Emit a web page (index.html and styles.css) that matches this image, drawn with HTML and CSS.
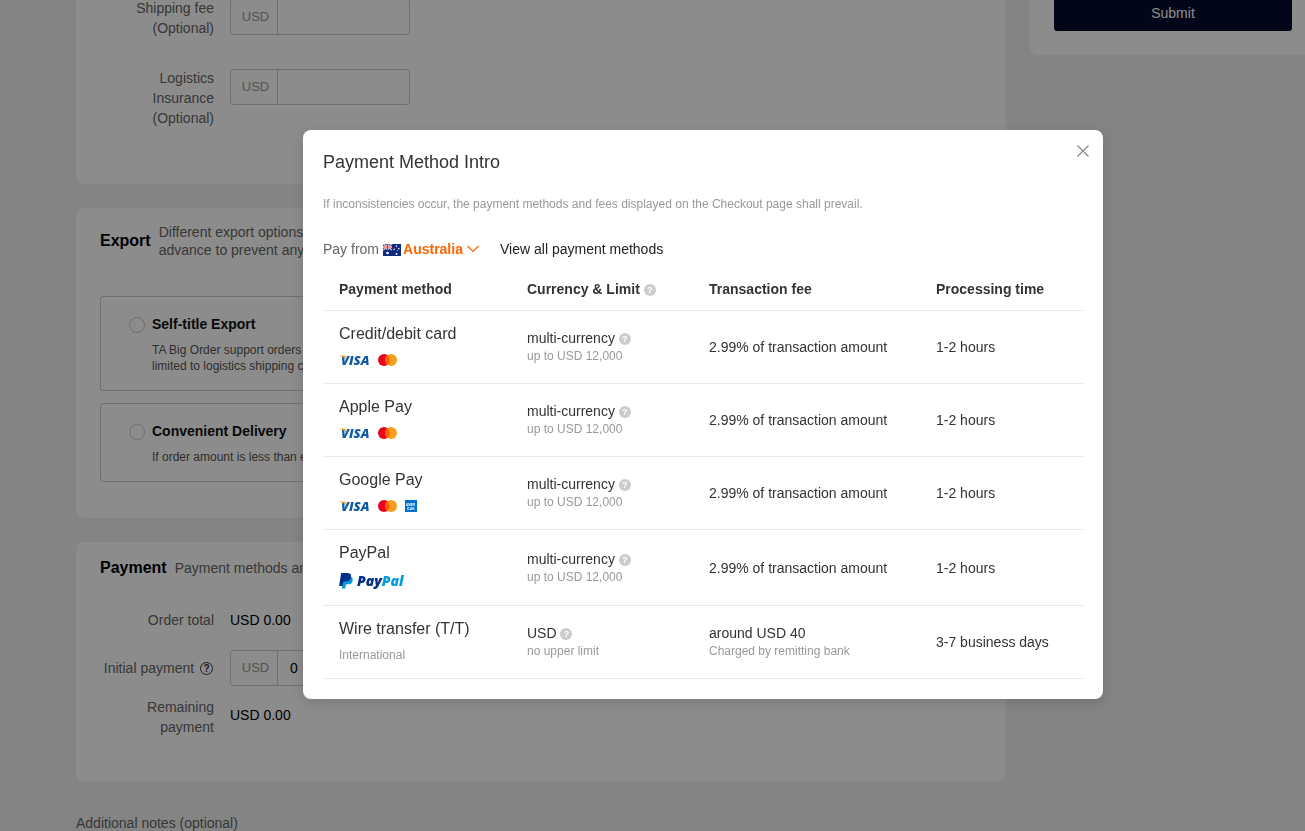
FILE: index.html
```
<!DOCTYPE html>
<html lang="en">
<head>
    <meta charset="UTF-8">
    <meta name="viewport" content="width=device-width, initial-scale=1.0">
    <title>Start Order</title>
    <link rel="stylesheet" href="styles.css">
</head>
<body>
    <!-- Shared logos -->
    <svg class="sprite" aria-hidden="true">
        <symbol id="visa" viewBox="0 0 34 14">
            <text class="visa-text" x="2" y="12">VISA</text>
            <path d="M1 2.500h4.200c.8 0 1.300.4 1.500 1.200l.6 3C6.200 5 4.500 3.600 1 2.900z" fill="#f7a21b"/>
        </symbol>
        <symbol id="mastercard" viewBox="0 0 20 12">
            <circle cx="6" cy="6" r="6" fill="#eb001b"/>
            <circle cx="13" cy="6" r="6" fill="#f79e1b"/>
            <path d="M9.500 1.130a6 6 0 0 1 0 9.740 6 6 0 0 1 0-9.740z" fill="#ff5f00"/>
        </symbol>
        <symbol id="amex" viewBox="0 0 12 12">
            <path d="M0 0h12v12H0z" fill="#016fd0"/>
            <text class="amex-text" x="1" y="6">AMER</text>
            <text class="amex-text" x="2" y="10">ICAN</text>
        </symbol>
        <symbol id="paypal" viewBox="0 0 68 18">
            <path d="M4.500 6.500 2.800 16.500h3.400l.8-4.200h2.200c2.600 0 4.100-1.400 4.500-3.900.3-1.800-.3-2.900-1.500-3.500z" fill="#009cde"/>
            <path d="M2.800 1h5.400c2.800 0 4.300 1.300 3.900 3.900-.5 3.100-2.500 4.600-5.500 4.600H5.100c-.5 0-.8.3-.9.800L3.600 14H.7c-.4 0-.6-.3-.5-.7L2 1.700c.1-.5.400-.7.800-.7z" fill="#003087"/>
            <text class="paypal-text" x="18" y="14">Pay<tspan fill="#009cde">Pal</tspan></text>
        </symbol>
    </svg>

    <div class="page">
        <main class="main">
            <section class="card card-fees">
                <div class="row">
                    <label class="row-label" for="shipping">Shipping fee (Optional)</label>
                    <div class="money">
                        <span class="money-unit">USD</span>
                        <input type="text" id="shipping">
                    </div>
                </div>
                <div class="row">
                    <label class="row-label" for="insurance">Logistics Insurance (Optional)</label>
                    <div class="money">
                        <span class="money-unit">USD</span>
                        <input type="text" id="insurance">
                    </div>
                </div>
            </section>

            <section class="card card-export">
                <div class="card-head">
                    <h2>Export</h2>
                    <p>Different export options<br>advance to prevent any</p>
                </div>
                <div class="option">
                    <input type="radio" name="export" id="selfTitle">
                    <div>
                        <label for="selfTitle">Self-title Export</label>
                        <p>TA Big Order support orders<br>limited to logistics shipping c</p>
                    </div>
                </div>
                <div class="option">
                    <input type="radio" name="export" id="convenient">
                    <div>
                        <label for="convenient">Convenient Delivery</label>
                        <p>If order amount is less than e</p>
                    </div>
                </div>
            </section>

            <section class="card card-payment">
                <div class="card-head">
                    <h2>Payment</h2>
                    <p>Payment methods an</p>
                </div>
                <div class="row">
                    <span class="row-label">Order total</span>
                    <span class="row-value">USD 0.00</span>
                </div>
                <div class="row row-input">
                    <label class="row-label" for="initial">Initial payment <span class="hint">?</span></label>
                    <div class="money">
                        <span class="money-unit">USD</span>
                        <input type="text" id="initial" value="0">
                    </div>
                </div>
                <div class="row">
                    <span class="row-label">Remaining payment</span>
                    <span class="row-value">USD 0.00</span>
                </div>
            </section>

            <p class="notes">Additional notes (optional)</p>
        </main>

        <aside class="sidebar">
            <button type="button" class="submit">Submit</button>
        </aside>
    </div>

    <!-- Payment method dialog -->
    <div class="overlay">
        <div class="modal" role="dialog" aria-labelledby="modalTitle">
            <button type="button" class="close" aria-label="Close">
                <svg width="12" height="12" viewBox="0 0 12 12"><path d="M.5.5l11 11M11.500.5l-11 11" stroke="#888" stroke-width="1.200" fill="none"/></svg>
            </button>
            <h1 id="modalTitle">Payment Method Intro</h1>
            <p class="modal-note">If inconsistencies occur, the payment methods and fees displayed on the Checkout page shall prevail.</p>

            <div class="filter">
                <label for="country">Pay from</label>
                <svg class="flag" width="18" height="12" viewBox="0 0 18 12">
                    <path d="M0 0h18v12H0z" fill="#0b2a80"/>
                    <path d="M0 0l9 6M9 0L0 6" stroke="#fff" stroke-width="1.400"/>
                    <path d="M0 0l9 6M9 0L0 6" stroke="#e4263b" stroke-width=".5"/>
                    <path d="M4.500 0v6M0 3h9" stroke="#fff" stroke-width="2"/>
                    <path d="M4.500 0v6M0 3h9" stroke="#e4263b"/>
                    <g fill="#fff">
                        <circle cx="4.500" cy="9" r="1.300"/>
                        <circle cx="13.500" cy="2" r=".8"/>
                        <circle cx="11.300" cy="5.300" r=".8"/>
                        <circle cx="15.800" cy="4.600" r=".8"/>
                        <circle cx="13.500" cy="10" r=".9"/>
                        <circle cx="14.600" cy="6.500" r=".4"/>
                    </g>
                </svg>
                <div class="country">
                    <select id="country">
                        <option>Australia</option>
                    </select>
                    <svg width="12" height="8" viewBox="0 0 12 8"><path d="M.5 1L6 6.500 11.500 1" stroke="#ff6600" stroke-width="1.200" fill="none"/></svg>
                </div>
                <a href="#">View all payment methods</a>
            </div>

            <table>
                <thead>
                    <tr>
                        <th class="col-method">Payment method</th>
                        <th class="col-limit">Currency &amp; Limit <span class="help">?</span></th>
                        <th class="col-fee">Transaction fee</th>
                        <th>Processing time</th>
                    </tr>
                </thead>
                <tbody>
                    <tr>
                        <td>
                            <div class="method">Credit/debit card</div>
                            <div class="logos">
                                <svg width="34" height="14"><use href="#visa"/></svg>
                                <svg width="20" height="12"><use href="#mastercard"/></svg>
                            </div>
                        </td>
                        <td>multi-currency <span class="help">?</span><small>up to USD 12,000</small></td>
                        <td>2.99% of transaction amount</td>
                        <td>1-2 hours</td>
                    </tr>
                    <tr>
                        <td>
                            <div class="method">Apple Pay</div>
                            <div class="logos">
                                <svg width="34" height="14"><use href="#visa"/></svg>
                                <svg width="20" height="12"><use href="#mastercard"/></svg>
                            </div>
                        </td>
                        <td>multi-currency <span class="help">?</span><small>up to USD 12,000</small></td>
                        <td>2.99% of transaction amount</td>
                        <td>1-2 hours</td>
                    </tr>
                    <tr>
                        <td>
                            <div class="method">Google Pay</div>
                            <div class="logos">
                                <svg width="34" height="14"><use href="#visa"/></svg>
                                <svg width="20" height="12"><use href="#mastercard"/></svg>
                                <svg class="amex" width="12" height="12"><use href="#amex"/></svg>
                            </div>
                        </td>
                        <td>multi-currency <span class="help">?</span><small>up to USD 12,000</small></td>
                        <td>2.99% of transaction amount</td>
                        <td>1-2 hours</td>
                    </tr>
                    <tr>
                        <td>
                            <div class="method">PayPal</div>
                            <div class="logos logos-paypal">
                                <svg width="68" height="18"><use href="#paypal"/></svg>
                            </div>
                        </td>
                        <td>multi-currency <span class="help">?</span><small>up to USD 12,000</small></td>
                        <td>2.99% of transaction amount</td>
                        <td>1-2 hours</td>
                    </tr>
                    <tr>
                        <td>
                            <div class="method">Wire transfer (T/T)</div>
                            <div class="logos"><small>International</small></div>
                        </td>
                        <td>USD <span class="help">?</span><small>no upper limit</small></td>
                        <td>around USD 40<small>Charged by remitting bank</small></td>
                        <td>3-7 business days</td>
                    </tr>
                </tbody>
            </table>
        </div>
    </div>
</body>
</html>
```
FILE: styles.css
```
/* General styles */
* {
    box-sizing: border-box;
}

body {
    margin: 0;
    height: 100vh;
    overflow: hidden;
    font-family: "Liberation Sans", Arial, sans-serif;
    font-size: 14px;
    line-height: 20px;
    color: #333;
    background-color: #f0f0f0;
}

h1, h2, p {
    margin: 0;
}

input, select, button {
    font-family: inherit;
    font-size: 14px;
}

.sprite {
    display: none;
}

.page {
    display: flex;
    align-items: flex-start;
    gap: 24px;
    margin-top: -24px;
    padding-left: 76px;
}

.main {
    flex: 1;
}

/* Cards */
.card {
    margin-bottom: 24px;
    padding: 0 24px;
    border-radius: 8px;
    background-color: #fff;
}

.card-fees {
    padding-top: 22px;
    padding-bottom: 56px;
}

.card-export {
    padding-top: 15px;
    padding-bottom: 36px;
}

.card-payment {
    padding-top: 16px;
    padding-bottom: 44px;
}

.card-head {
    display: flex;
    align-items: center;
    gap: 8px;
    line-height: 18px;
    color: #666;
}

.card-head h2 {
    font-size: 16px;
    line-height: 20px;
    color: #000;
}

/* Form rows */
.row {
    display: flex;
    gap: 16px;
}

.row-label {
    width: 114px;
    text-align: right;
    color: #666;
}

.row-value {
    color: #000;
}

.card-fees .row + .row {
    margin-top: 30px;
}

.card-payment .row {
    margin-top: 11px;
}

.card-payment .card-head + .row {
    margin-top: 32px;
}

.card-payment .row-input {
    align-items: center;
    margin-top: 20px;
}

.card-payment .row:last-child .row-value {
    padding-top: 8px;
}

.money {
    display: flex;
    width: 180px;
    height: 36px;
    border: 1px solid #ccc;
    border-radius: 3px;
}

.card-fees .money {
    margin-top: 1px;
}

.money-unit {
    width: 47px;
    padding-left: 3px;
    border-right: 1px solid #ccc;
    font-size: 13px;
    line-height: 34px;
    text-align: center;
    color: #999;
}

.money input {
    flex: 1;
    min-width: 0;
    padding: 0 12px;
    border: none;
    background: none;
}

.hint {
    display: inline-block;
    width: 13px;
    height: 13px;
    margin: 0 1px 0 2px;
    border: 1px solid #333;
    border-radius: 50%;
    font-size: 10px;
    font-weight: bold;
    line-height: 11px;
    text-align: center;
    vertical-align: 1px;
    color: #333;
}

/* Export options */
.option {
    display: flex;
    gap: 7px;
    margin-top: 12px;
    padding: 18px 28px 16px;
    border: 1px solid #ccc;
    border-radius: 3px;
}

.card-head + .option {
    margin-top: 37px;
}

.option input {
    appearance: none;
    flex: none;
    width: 16px;
    height: 16px;
    margin: 2px 0 0;
    border: 1px solid #ccc;
    border-radius: 50%;
}

.option label {
    display: block;
    font-weight: bold;
    line-height: 18px;
    color: #111;
}

.option p {
    margin-top: 9px;
    font-size: 12px;
    line-height: 16px;
    color: #555;
}

.notes {
    margin-top: 32px;
    color: #666;
}

/* Sidebar */
.sidebar {
    width: 275px;
    padding: 7px 13px 24px 24px;
    border-radius: 8px 0 0 8px;
    background-color: #fff;
}

.submit {
    display: block;
    width: 100%;
    height: 48px;
    padding-top: 12px;
    border: none;
    border-radius: 3px;
    color: #fff;
    background-color: #050c2c;
}

/* Dialog */
.overlay {
    position: fixed;
    inset: 0;
    display: flex;
    justify-content: center;
    align-items: flex-start;
    padding: 130px 0 0 101px;
    background-color: rgba(0, 0, 0, 0.45);
}

.modal {
    position: relative;
    width: 800px;
    padding: 20px;
    border-radius: 8px;
    background-color: #fff;
    box-shadow: 0 4px 16px rgba(0, 0, 0, 0.15);
}

.modal h1 {
    font-size: 18px;
    font-weight: normal;
    line-height: 24px;
}

.close {
    position: absolute;
    top: 15px;
    right: 14px;
    width: 12px;
    height: 12px;
    padding: 0;
    border: none;
    background: none;
}

.close svg {
    display: block;
}

.modal-note {
    margin-top: 21px;
    font-size: 12px;
    line-height: 18px;
    color: #999;
}

.filter {
    display: flex;
    align-items: center;
    margin-top: 26px;
    color: #666;
}

.flag {
    margin: 2px 2px 0 4px;
}

.country {
    position: relative;
    margin-right: 21px;
}

.country select {
    appearance: none;
    display: block;
    height: 20px;
    padding: 0 16px 0 0;
    border: none;
    font-weight: bold;
    color: #ff6600;
    background: none;
}

.country svg {
    position: absolute;
    top: 6px;
    right: 0;
    pointer-events: none;
}

.filter a {
    color: #222;
    text-decoration: none;
}

/* Methods table */
table {
    width: 100%;
    margin-top: 9px;
    border-spacing: 0;
    table-layout: fixed;
}

th, td {
    padding: 13px 0 13px 16px;
    border-bottom: 1px solid #e8e8e8;
    text-align: left;
    line-height: 18px;
}

th {
    height: 43px;
    padding: 0 0 0 16px;
}

.col-method {
    width: 188px;
}

.col-limit {
    width: 182px;
}

.col-fee {
    width: 227px;
}

.method {
    font-size: 16px;
    line-height: 20px;
}

.logos {
    display: flex;
    align-items: center;
    gap: 5px;
    height: 20px;
    margin-top: 6px;
}

.logos-paypal {
    height: 23px;
}

.amex {
    margin-left: 2px;
}

small {
    display: block;
    font-size: 12px;
    color: #999;
}

.help {
    display: inline-block;
    width: 12px;
    height: 12px;
    border-radius: 50%;
    font-size: 9px;
    font-weight: bold;
    line-height: 12px;
    text-align: center;
    vertical-align: 1px;
    color: #fff;
    background-color: #ccc;
}

.visa-text {
    font-family: "Open Sans", sans-serif;
    font-size: 13px;
    font-weight: 800;
    font-style: italic;
    fill: #0e5ba3;
}

.amex-text {
    font-size: 3px;
    font-weight: bold;
    fill: #fff;
}

.paypal-text {
    font-family: "Open Sans", sans-serif;
    font-size: 14px;
    font-weight: 800;
    font-style: italic;
    fill: #003087;
}
```
